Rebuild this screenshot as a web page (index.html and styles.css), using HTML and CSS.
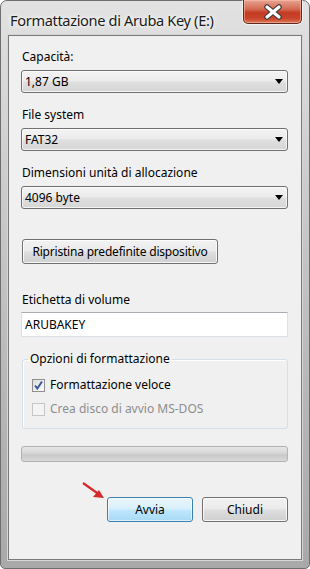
FILE: index.html
```html
<!DOCTYPE html>
<html lang="it">
<head>
  <meta charset="UTF-8" />
  <meta name="viewport" content="width=device-width, initial-scale=1.0" />
  <title>Formattazione di Aruba Key (E:)</title>
  <link rel="stylesheet" href="styles.css">
</head>
<body>
  <!-- Finestra di dialogo -->
  <div class="window">
    <div class="titlebar">
      <span class="title">Formattazione di Aruba Key (E:)</span>
      <button class="close" aria-label="Chiudi">
        <svg width="22" height="16" viewBox="0 0 22 16">
          <path d="M5 3 L17 13 M17 3 L5 13" stroke="#3b3b3b" stroke-width="5.5" stroke-linecap="round" />
          <path d="M5 3 L17 13 M17 3 L5 13" stroke="#ffffff" stroke-width="3.2" stroke-linecap="round" />
        </svg>
      </button>
    </div>

    <div class="client">
      <div class="label first">Capacità:</div>
      <div class="combo">1,87 GB<span class="caret"></span></div>

      <div class="label">File system</div>
      <div class="combo">FAT32<span class="caret"></span></div>

      <div class="label">Dimensioni unità di allocazione</div>
      <div class="combo">4096 byte<span class="caret"></span></div>

      <button class="btn reset">Ripristina predefinite dispositivo</button>

      <div class="label volume">Etichetta di volume</div>
      <div class="textbox">ARUBAKEY</div>

      <fieldset class="group">
        <legend>Opzioni di formattazione</legend>
        <div class="check">
          <span class="box checked">
            <svg width="11" height="11" viewBox="0 0 11 11">
              <path d="M2 5.5 L4.3 8.5 L9 1.5" fill="none" stroke="#3d58a0" stroke-width="2" />
            </svg>
          </span>
          Formattazione veloce
        </div>
        <div class="check disabled">
          <span class="box"></span>
          Crea disco di avvio MS-DOS
        </div>
      </fieldset>

      <div class="progress"></div>

      <div class="actions">
        <button class="btn primary">Avvia</button>
        <button class="btn">Chiudi</button>
      </div>
    </div>

    <!-- freccia rossa di annotazione -->
    <svg class="pointer" width="30" height="24" viewBox="0 0 30 24">
      <path d="M2 2 L19 14" stroke="#d42a2a" stroke-width="2.2" />
      <path d="M23 17 L12 16 L18 9 Z" fill="#d42a2a" />
    </svg>
  </div>
</body>
</html>
```

FILE: styles.css
```css
/* Pagina */
body {
  margin: 0;
  font-family: "Noto Sans", sans-serif;
  font-size: 12px;
  color: #000;
  background: #fff;
}

/* Cornice della finestra */
.window {
  position: relative;
  box-sizing: border-box;
  width: 310px;
  height: 569px;
  display: flex;
  flex-direction: column;
  padding: 0 7px 8px 7px;
  border: 1px solid #6e6e6e;
  border-radius: 7px 7px 5px 5px;
  background: linear-gradient(#e2e2e2, #cdcdcd 30%, #b6b6b6 70%, #a9a9a9);
}

.titlebar {
  height: 34px;
  display: flex;
  align-items: flex-start;
  justify-content: space-between;
}

.title {
  margin: 9px 0 0 2px;
  font-size: 14.6px;
  letter-spacing: -0.35px;
  color: #1a1a1a;
  text-shadow: 0 0 6px #fff, 0 0 3px #fff;
}

/* Pulsante rosso di chiusura */
.close {
  width: 59px;
  height: 24px;
  margin: -1px 0 0 0;
  padding: 0;
  border: 1px solid #5c2a22;
  border-top: none;
  border-radius: 0 0 5px 5px;
  background: linear-gradient(#e8a493, #d46a52 40%, #c43b22 55%, #c9452b 80%, #dd7a55);
  box-shadow: inset 0 0 0 1px rgba(255, 200, 180, 0.5), 0 0 0 1px rgba(255, 255, 255, 0.6);
  display: flex;
  align-items: center;
  justify-content: center;
}

/* Area client */
.client {
  flex: 1;
  display: flex;
  flex-direction: column;
  padding: 0 13px 0 12px;
  border: 1px solid #7a7a7a;
  background: #f0f0f0;
  box-shadow: 0 0 0 1px #d6d6d6;
}

.label {
  line-height: 16px;
  margin-top: 14px;
  padding-left: 1px;
}

.label.first {
  margin-top: 13px;
}

.label.volume {
  margin-top: 28px;
}

.combo {
  position: relative;
  box-sizing: border-box;
  height: 23px;
  margin-top: 5px;
  padding: 3px 0 0 3px;
  line-height: 16px;
  border: 1px solid #707070;
  border-radius: 3px;
  background: linear-gradient(#f3f3f3, #ececec 45%, #dedede 55%, #d6d6d6);
  box-shadow: inset 0 0 0 1px rgba(255, 255, 255, 0.7);
}

.caret {
  position: absolute;
  right: 4px;
  top: 8px;
  border-left: 4px solid transparent;
  border-right: 4px solid transparent;
  border-top: 5px solid #000;
}

/* Pulsanti */
.btn {
  box-sizing: border-box;
  height: 25px;
  padding: 0 6px;
  font-family: inherit;
  font-size: 12px;
  color: #000;
  white-space: nowrap;
  border: 1px solid #707070;
  border-radius: 3px;
  background: linear-gradient(#f2f2f2, #ebebeb 45%, #dddddd 55%, #cfcfcf);
  box-shadow: inset 0 0 0 1px rgba(255, 255, 255, 0.8);
}

.btn.reset {
  align-self: flex-start;
  margin: 30px 0 0 1px;
  width: 196px;
  letter-spacing: -0.2px;
}

.btn.primary {
  border-color: #3c7fb1;
  background: linear-gradient(#eaf6fd, #d9f0fc 45%, #bee6fd 55%, #a7d9f5);
  box-shadow: inset 0 0 0 1px rgba(255, 255, 255, 0.6);
}

.textbox {
  box-sizing: border-box;
  height: 25px;
  margin-top: 4px;
  padding: 4px 0 0 3px;
  line-height: 16px;
  background: #fff;
  border: 1px solid #dbdfe6;
  border-top-color: #abadb3;
}

/* Gruppo opzioni */
.group {
  margin: 14px 0 0 1px;
  padding: 10px 0 11px 9px;
  border: 1px solid #d5dfe5;
  border-radius: 3px;
  box-shadow: inset 1px 1px 0 #fff;
}

.group legend {
  margin-left: -4px;
  padding: 0 2px;
  line-height: 16px;
}

.check {
  display: flex;
  align-items: center;
  gap: 5px;
  height: 16px;
  line-height: 16px;
}

.check + .check {
  margin-top: 8px;
}

.box {
  box-sizing: border-box;
  width: 13px;
  height: 13px;
  border: 1px solid #8f8f8f;
  background: linear-gradient(135deg, #dcdcdc, #fefefe);
  display: flex;
  align-items: center;
  justify-content: center;
}

.check.disabled {
  color: #8d8d8d;
}

.check.disabled .box {
  border-color: #c6c6c6;
  background: #f4f4f4;
}

.progress {
  height: 16px;
  margin-top: 17px;
  box-sizing: border-box;
  border: 1px solid #b2b2b2;
  border-radius: 3px;
  background: linear-gradient(#e6e6e6, #d8d8d8 40%, #c9c9c9 60%, #dadada);
}

.actions {
  display: flex;
  justify-content: flex-end;
  gap: 9px;
  margin-top: 35px;
}

.actions .btn {
  width: 86px;
}

/* Freccia rossa */
.pointer {
  position: absolute;
  left: 80px;
  top: 480px;
}
```
